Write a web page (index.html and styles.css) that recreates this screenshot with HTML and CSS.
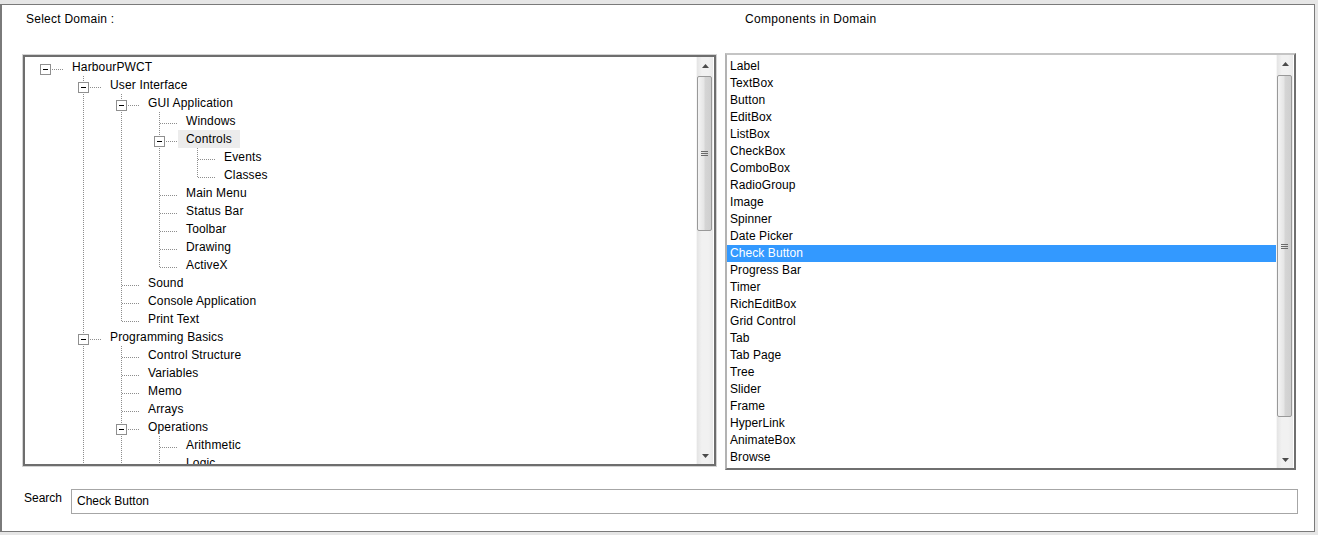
FILE: index.html
```html
<!DOCTYPE html>
<html>
<head>
<meta charset="utf-8">
<title>Select Domain</title>
<link rel="stylesheet" href="styles.css">
</head>
<body>
<div class="window">
  <div class="cols header">
    <div class="hdr hdr-left">Select Domain :</div>
    <div class="hdr hdr-right">Components in Domain</div>
  </div>
  <div class="cols panes">
    <div class="tree-box">
      <div class="tree-view">
        <div class="row"><span class="c root"><b class="box"></b></span><span class="t">HarbourPWCT</span></div>
        <div class="row"><span class="g"></span><span class="c dn"><b class="box"></b></span><span class="t">User Interface</span></div>
        <div class="row"><span class="g"></span><span class="g on"></span><span class="c dn"><b class="box"></b></span><span class="t">GUI Application</span></div>
        <div class="row"><span class="g"></span><span class="g on"></span><span class="g on"></span><span class="c dn"></span><span class="t">Windows</span></div>
        <div class="row"><span class="g"></span><span class="g on"></span><span class="g on"></span><span class="c dn"><b class="box"></b></span><span class="t sel">Controls</span></div>
        <div class="row"><span class="g"></span><span class="g on"></span><span class="g on"></span><span class="g on"></span><span class="c dn"></span><span class="t">Events</span></div>
        <div class="row"><span class="g"></span><span class="g on"></span><span class="g on"></span><span class="g on"></span><span class="c"></span><span class="t">Classes</span></div>
        <div class="row"><span class="g"></span><span class="g on"></span><span class="g on"></span><span class="c dn"></span><span class="t">Main Menu</span></div>
        <div class="row"><span class="g"></span><span class="g on"></span><span class="g on"></span><span class="c dn"></span><span class="t">Status Bar</span></div>
        <div class="row"><span class="g"></span><span class="g on"></span><span class="g on"></span><span class="c dn"></span><span class="t">Toolbar</span></div>
        <div class="row"><span class="g"></span><span class="g on"></span><span class="g on"></span><span class="c dn"></span><span class="t">Drawing</span></div>
        <div class="row"><span class="g"></span><span class="g on"></span><span class="g on"></span><span class="c"></span><span class="t">ActiveX</span></div>
        <div class="row"><span class="g"></span><span class="g on"></span><span class="c dn"></span><span class="t">Sound</span></div>
        <div class="row"><span class="g"></span><span class="g on"></span><span class="c dn"></span><span class="t">Console Application</span></div>
        <div class="row"><span class="g"></span><span class="g on"></span><span class="c"></span><span class="t">Print Text</span></div>
        <div class="row"><span class="g"></span><span class="c dn"><b class="box"></b></span><span class="t">Programming Basics</span></div>
        <div class="row"><span class="g"></span><span class="g on"></span><span class="c dn"></span><span class="t">Control Structure</span></div>
        <div class="row"><span class="g"></span><span class="g on"></span><span class="c dn"></span><span class="t">Variables</span></div>
        <div class="row"><span class="g"></span><span class="g on"></span><span class="c dn"></span><span class="t">Memo</span></div>
        <div class="row"><span class="g"></span><span class="g on"></span><span class="c dn"></span><span class="t">Arrays</span></div>
        <div class="row"><span class="g"></span><span class="g on"></span><span class="c dn"><b class="box"></b></span><span class="t">Operations</span></div>
        <div class="row"><span class="g"></span><span class="g on"></span><span class="g on"></span><span class="c dn"></span><span class="t">Arithmetic</span></div>
        <div class="row"><span class="g"></span><span class="g on"></span><span class="g on"></span><span class="c dn"></span><span class="t">Logic</span></div>
      </div>
      <div class="sb sb-tree">
        <div class="sb-btn"><svg width="7" height="4" viewBox="0 0 7 4"><path d="M0 4L3.5 0L7 4Z" fill="#4b4b4b"/></svg></div>
        <div class="sb-thumb thumb-tree"><svg width="7" height="5" viewBox="0 0 7 5"><path d="M0 0.5H7M0 2.5H7M0 4.5H7" stroke="#6a6a6a" stroke-width="1"/></svg></div>
        <div class="sb-fill"></div>
        <div class="sb-btn"><svg width="7" height="4" viewBox="0 0 7 4"><path d="M0 0L3.5 4L7 0Z" fill="#4b4b4b"/></svg></div>
      </div>
    </div>
    <div class="list-box">
      <ul class="list">
        <li>Label</li>
        <li>TextBox</li>
        <li>Button</li>
        <li>EditBox</li>
        <li>ListBox</li>
        <li>CheckBox</li>
        <li>ComboBox</li>
        <li>RadioGroup</li>
        <li>Image</li>
        <li>Spinner</li>
        <li>Date Picker</li>
        <li class="selected">Check Button</li>
        <li>Progress Bar</li>
        <li>Timer</li>
        <li>RichEditBox</li>
        <li>Grid Control</li>
        <li>Tab</li>
        <li>Tab Page</li>
        <li>Tree</li>
        <li>Slider</li>
        <li>Frame</li>
        <li>HyperLink</li>
        <li>AnimateBox</li>
        <li>Browse</li>
      </ul>
      <div class="sb sb-list">
        <div class="sb-btn"><svg width="7" height="4" viewBox="0 0 7 4"><path d="M0 4L3.5 0L7 4Z" fill="#4b4b4b"/></svg></div>
        <div class="sb-thumb thumb-list"><svg width="7" height="5" viewBox="0 0 7 5"><path d="M0 0.5H7M0 2.5H7M0 4.5H7" stroke="#6a6a6a" stroke-width="1"/></svg></div>
        <div class="sb-fill"></div>
        <div class="sb-btn"><svg width="7" height="4" viewBox="0 0 7 4"><path d="M0 0L3.5 4L7 0Z" fill="#4b4b4b"/></svg></div>
      </div>
    </div>
  </div>
  <div class="search-row">
    <label class="search-label" for="search">Search</label>
    <input id="search" class="search-input" type="text" value="Check Button">
  </div>
</div>
</body>
</html>
```

FILE: styles.css
```css
html, body {
  margin: 0;
  padding: 0;
}

body {
  background: #e6e6e6;
  font-family: "Liberation Sans", Arial, sans-serif;
  font-size: 12px;
  color: #000;
  overflow: hidden;
}

.window {
  margin-top: 4px;
  width: 1315px;
  height: 528px;
  box-sizing: border-box;
  border: 1px solid #7a7a7a;
  border-left-width: 2px;
  background: #fff;
  padding-top: 6px;
}

.cols {
  display: grid;
  grid-template-columns: 693px 571px;
  column-gap: 9px;
  padding-left: 21px;
}

.header {
  height: 42px;
  line-height: 17px;
  letter-spacing: 0.25px;
}

.hdr-left {
  padding-left: 3px;
}

.hdr-right {
  padding-left: 20px;
  letter-spacing: 0.3px;
}

.panes {
  align-items: start;
}

/* ---------- tree ---------- */
.tree-box {
  margin-top: 2px;
  height: 411px;
  box-sizing: border-box;
  border: 2px solid #6e6e6e;
  box-shadow: 0 0 0 1px #d3d3d3;
  background: #fff;
  display: flex;
  overflow: hidden;
}

.tree-view {
  flex: 1;
  padding: 1px 0 0 1px;
  overflow: hidden;
  letter-spacing: 0.15px;
}

.row {
  display: flex;
  height: 18px;
  line-height: 18px;
  white-space: nowrap;
}

.g {
  flex: none;
  width: 38px;
  height: 18px;
}

.g.on {
  background-image: linear-gradient(to bottom, #8d8d8d 50%, transparent 50%);
  background-size: 1px 2px;
  background-position: 19px 0;
  background-repeat: repeat-y;
}

.c {
  flex: none;
  position: relative;
  width: 38px;
  height: 18px;
}

.c::before {
  content: "";
  position: absolute;
  left: 19px;
  top: 0;
  width: 1px;
  height: 11px;
  background-image: linear-gradient(to bottom, #8d8d8d 50%, transparent 50%);
  background-size: 1px 2px;
}

.c.dn::before {
  height: 18px;
}

.c.root::before {
  display: none;
}

.c::after {
  content: "";
  position: absolute;
  left: 20px;
  top: 11px;
  width: 18px;
  height: 1px;
  background-image: linear-gradient(to right, #8d8d8d 50%, transparent 50%);
  background-size: 2px 1px;
}

.box {
  position: absolute;
  z-index: 1;
  left: 14px;
  top: 6px;
  width: 11px;
  height: 11px;
  box-sizing: border-box;
  border: 1px solid #8f8f8f;
  background: #fff;
}

.box::after {
  content: "";
  position: absolute;
  left: 2px;
  top: 4px;
  width: 5px;
  height: 1px;
  background: #000;
}

.t {
  padding: 0 8px 0 8px;
  height: 18px;
}

.t.sel {
  background: #ececec;
}

/* ---------- scrollbars ---------- */
.sb {
  flex: none;
  width: 17px;
  display: flex;
  flex-direction: column;
  background: linear-gradient(to right, #e4e4e4, #f1f1f1 30%, #f1f1f1 70%, #e9e9e9);
  border-left: 1px solid #f6f6f6;
  box-sizing: border-box;
}

.sb-tree {
  margin-right: 1px;
}

.sb-list {
  margin-right: 1px;
}

.sb-btn {
  flex: none;
  height: 17px;
  display: flex;
  align-items: center;
  justify-content: center;
}

.sb-thumb {
  flex: none;
  margin: 0 1px 0 0;
  box-sizing: border-box;
  border: 1px solid #999;
  border-radius: 2px;
  background: linear-gradient(to right, #f4f4f4, #e6e6e6 45%, #d5d5d5 55%, #cfcfcf);
  display: flex;
  align-items: center;
  justify-content: center;
}

.thumb-tree {
  margin-top: 2px;
  height: 155px;
}

.thumb-list {
  margin-top: 3px;
  height: 342px;
}

.sb-fill {
  flex: 1;
}

/* ---------- list ---------- */
.list-box {
  height: 417px;
  box-sizing: border-box;
  border: 2px solid;
  border-color: #c4c4c4 #6f6f6f #6f6f6f #b3b3b3;
  background: #fff;
  display: flex;
  overflow: hidden;
}

.list {
  flex: 1;
  margin: 0;
  padding: 3px 0 0 0;
  list-style: none;
  overflow: hidden;
  letter-spacing: 0.08px;
}

.list li {
  height: 17px;
  line-height: 17px;
  padding-left: 3px;
  white-space: nowrap;
}

.list li.selected {
  background: #3399ff;
  color: #fff;
}

/* ---------- search ---------- */
.search-row {
  display: flex;
  margin-top: 19px;
  padding-left: 22px;
}

.search-label {
  width: 47px;
  line-height: 17px;
  padding-top: 1px;
}

.search-input {
  width: 1227px;
  height: 25px;
  box-sizing: border-box;
  margin: 0;
  border: 1px solid #a6a6a6;
  padding: 0 5px 2px 5px;
  font-family: "Liberation Sans", Arial, sans-serif;
  font-size: 12px;
  color: #000;
  background: #fff;
  outline: none;
}
```
